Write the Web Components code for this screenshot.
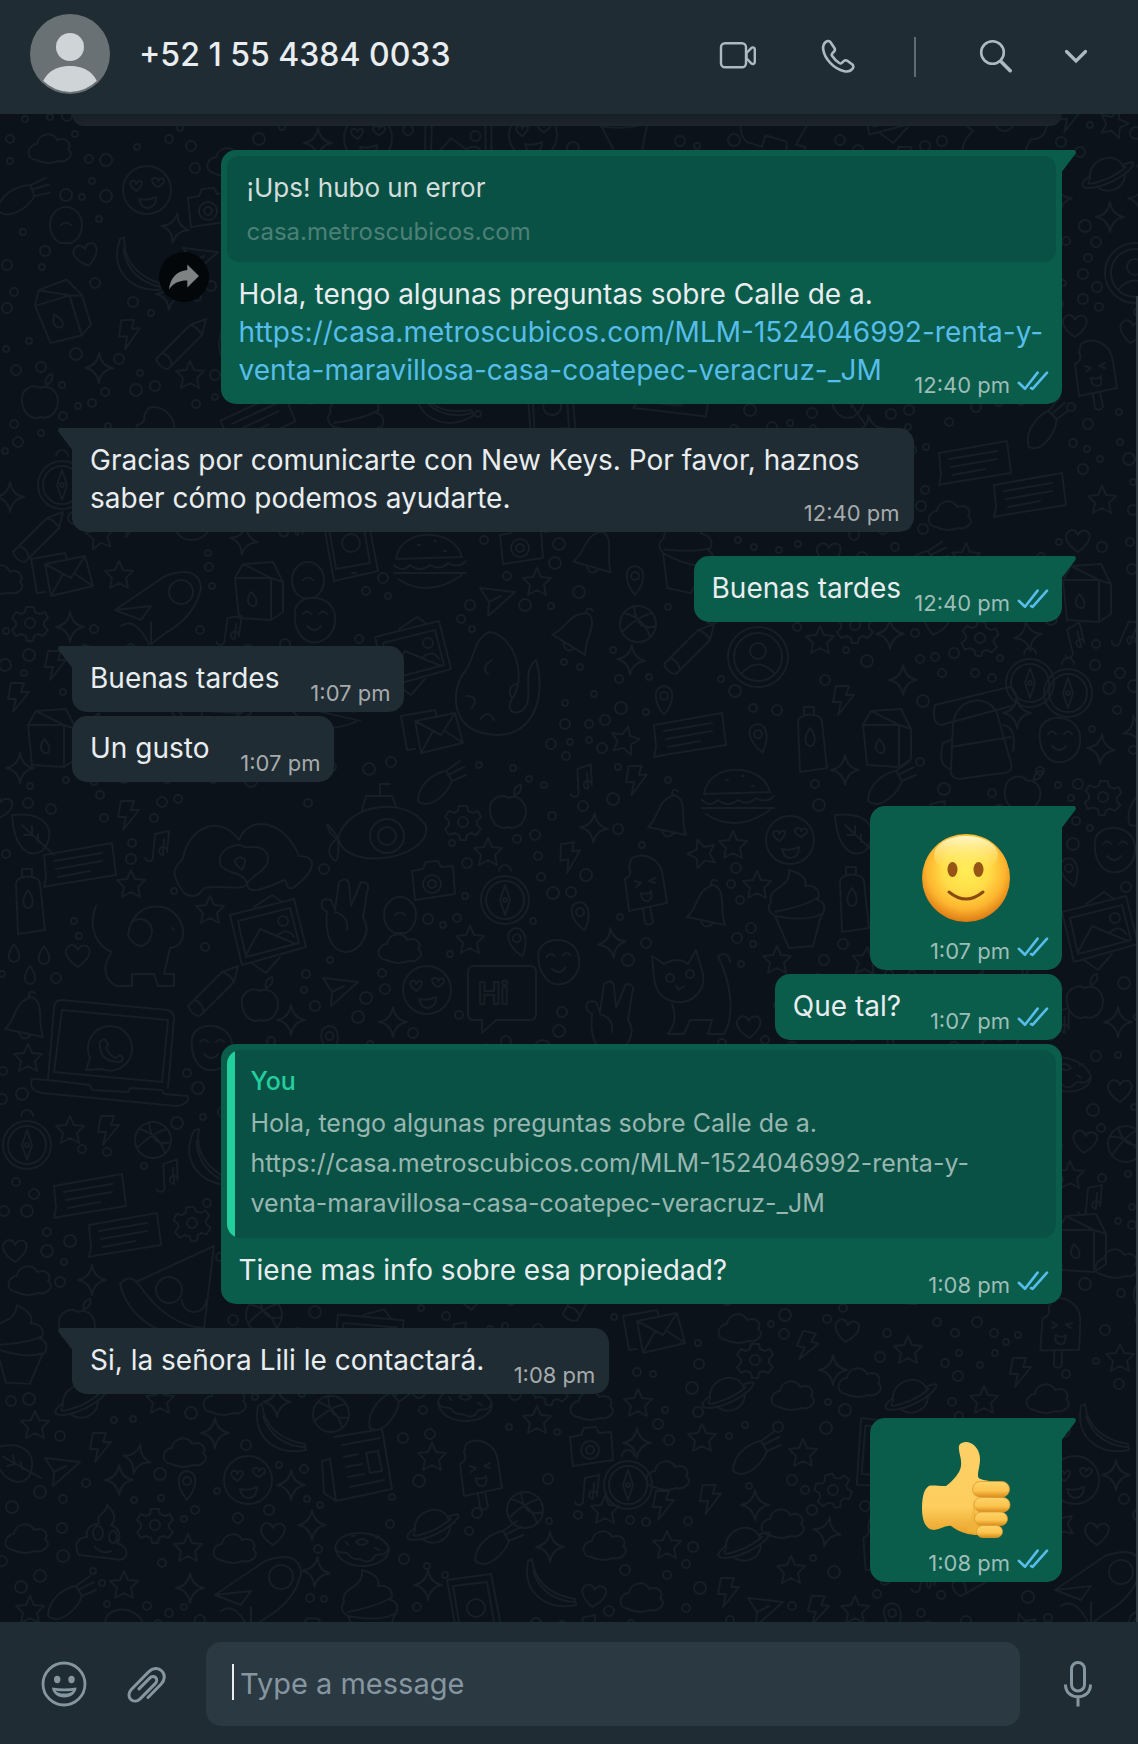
<!DOCTYPE html>
<html lang="es">
<head>
<meta charset="utf-8">
<meta name="viewport" content="width=device-width, initial-scale=1">
<title>Chat</title>
<style>
  html, body { margin: 0; height: 100%; }
  body {
    --panel: #202c33; --canvas: #0b1219; --doodle: #171f26;
    --in: #202c33; --out: #0a5c4b; --card: #0a5145; --text: #e9edef;
    --icon: #aebac1; --muted: #8696a0; --link: #57bdea; --accent: #22cf9d;
    background: var(--canvas); color: var(--text);
    font-family: Inter, "Liberation Sans", sans-serif; font-size: 28px; line-height: 38px;
  }
</style>
</head>
<body>
<chat-app>
  <chat-header slot="header">+52 1 55 4384 0033</chat-header>
  <chat-bubble side="out" tail time="12:40 pm" wide forward>
    <link-card slot="card" site="casa.metroscubicos.com">¡Ups! hubo un error</link-card>
    Hola, tengo algunas preguntas sobre Calle de a.<br><chat-link href="#casa"><span>https://casa.metroscubicos.com/MLM-1524046992-renta-y-</span><span>venta-maravillosa-casa-coatepec-veracruz-_JM</span></chat-link>
  </chat-bubble>
  <chat-bubble side="in" tail time="12:40 pm" wide><span>Gracias por comunicarte con New Keys. Por favor, haznos</span> <span>saber cómo podemos ayudarte.</span></chat-bubble>
  <chat-bubble side="out" tail time="12:40 pm">Buenas tardes</chat-bubble>
  <chat-bubble side="in" tail time="1:07 pm">Buenas tardes</chat-bubble>
  <chat-bubble side="in" time="1:07 pm">Un gusto</chat-bubble>
  <chat-bubble side="out" tail time="1:07 pm" emoji><emoji-smile></emoji-smile></chat-bubble>
  <chat-bubble side="out" time="1:07 pm">Que tal?</chat-bubble>
  <chat-bubble side="out" time="1:08 pm" wide>
    <quote-card slot="card" author="You">Hola, tengo algunas preguntas sobre Calle de a.<br>https://casa.metroscubicos.com/MLM-1524046992-renta-y-venta-maravillosa-casa-coatepec-veracruz-_JM</quote-card>
    Tiene mas info sobre esa propiedad?
  </chat-bubble>
  <chat-bubble side="in" tail time="1:08 pm">Si, la señora Lili le contactará.</chat-bubble>
  <chat-bubble side="out" tail time="1:08 pm" emoji><emoji-thumb></emoji-thumb></chat-bubble>
  <chat-composer slot="footer"></chat-composer>
</chat-app>

<script>
const define = (name, render) => customElements.define(name, class extends HTMLElement {
  connectedCallback() {
    if (this.shadowRoot) return;
    this.attachShadow({ mode: 'open' }).innerHTML = render(this);
  }
});

define('chat-app', () => `
  <style>
    :host { display: flex; flex-direction: column; min-height: 100vh; }
    main { position: relative; flex: 1; overflow: hidden; display: flex; flex-direction: column; }
    .list { position: relative; flex: 1; display: flex; flex-direction: column; padding: 0 76px 40px 72px; }
    .earlier { height: 12px; border-radius: 0 0 15px 15px; background: linear-gradient(#161f25, #1b252b); }
    .thumb { position: absolute; right: 0; top: 182px; bottom: 0; width: 2px; background: #323b41; }
  </style>
  <slot name="header"></slot>
  <main>
    <chat-wallpaper></chat-wallpaper>
    <div class="list"><div class="earlier"></div><slot></slot></div>
    <div class="thumb"></div>
  </main>
  <slot name="footer"></slot>`);

define('chat-header', () => `
  <style>
    :host { display: block; background: var(--panel); }
    header { display: flex; align-items: center; height: 114px; padding: 0 38px 0 30px; box-sizing: border-box; }
    .avatar { width: 80px; height: 80px; margin: 0 29px 6px 0; }
    h1 { flex: 1; margin: 0 0 4px; font-size: 32px; line-height: 40px; font-weight: 500; }
    .group { display: flex; gap: 52px; }
    .group.tight { gap: 32px; }
    .bar { width: 2px; height: 40px; margin: 0 56px 0 52px; background: #5f6b72; }
    button { width: 48px; height: 48px; padding: 0; border: 0; background: none; color: var(--icon); }
    svg { display: block; }
  </style>
  <header>
    <svg class="avatar" viewBox="0 0 80 80"><defs><clipPath id="c"><circle cx="40" cy="40" r="38"/></clipPath></defs>
      <circle cx="40" cy="40" r="40" fill="#6a7175"/>
      <circle cx="40" cy="33" r="14" fill="#cfd4d6"/>
      <path clip-path="url(#c)" d="M10 76C14 58 26 52 40 52s26 6 30 24v4H10z" fill="#cfd4d6"/></svg>
    <h1><slot></slot></h1>
    <div class="group">
      <button aria-label="Video call"><svg viewBox="0 0 48 48" fill="none" stroke="currentColor" stroke-width="2.4" stroke-linejoin="round"><rect x="7" y="10.200" width="25" height="24" rx="4"/><path d="M32.500 20l5-5.200c1.300-.9 3.300-.3 3.300 1.500v12.800c0 1.800-2 2.400-3.300 1.500l-5-5.200z"/></svg></button>
      <button aria-label="Voice call"><svg viewBox="0 0 48 48" fill="none" stroke="currentColor" stroke-width="2.600" stroke-linejoin="round"><path transform="translate(0 -1)" d="M12.200 9.600c1.400-1 3.300-.9 4.300.6l3.900 5.700c.8 1.200.6 2.600-.3 3.600l-1.800 1.900c-.7.8-.7 1.700-.1 2.600 2 3 4.100 5.100 7 7 .9.6 1.900.6 2.600-.1l1.900-1.800c1-.9 2.400-1.100 3.600-.3l4.700 3.400c1.500 1 1.700 3 .7 4.300-1.900 2.600-5.100 3.500-8.500 2.700C19.600 36.700 10.600 26.600 9.200 17.500c-.5-3.300.5-6 3-7.900z"/></svg></button>
    </div>
    <div class="bar"></div>
    <div class="group tight">
      <button aria-label="Search"><svg viewBox="0 0 48 48" fill="none" stroke="currentColor" stroke-linecap="round"><circle cx="20.500" cy="19.500" r="11.300" stroke-width="2.600"/><path d="M29 28.500l9.200 9.200" stroke-width="3.600"/></svg></button>
      <button aria-label="Menu"><svg viewBox="0 0 48 48" fill="none" stroke="currentColor" stroke-width="3.200" stroke-linecap="round"><path d="M14.500 18.500l9.500 9.500 9.500-9.500"/></svg></button>
    </div>
  </header>`);

const ticks = `<svg width="32" height="22" viewBox="0 0 32 22" fill="none" stroke="var(--link)" stroke-width="2.600" stroke-linecap="round" stroke-linejoin="round"><path d="M1.800 12.800l6.200 6L20.600 2.600M14 18l1.600.8L30 2.600"/></svg>`;

define('chat-bubble', el => {
  const out = el.getAttribute('side') === 'out';
  const emoji = el.hasAttribute('emoji');
  return `
  <style>
    :host { display: flex; align-items: center; gap: 12px; margin-top: 4px; justify-content: flex-start; }
    :host([tail]) { margin-top: 24px; }
    :host([side=out]) { justify-content: flex-end; }
    .bubble { position: relative; box-sizing: border-box; border-radius: 15px; background: var(--in); max-width: 85%; }
    :host([wide]) .bubble { width: 85%; }
    :host([side=out]) .bubble { background: var(--out); }
    :host([tail][side=out]) .bubble { border-top-right-radius: 0; }
    :host([tail][side=in]) .bubble { border-top-left-radius: 0; }
    .body { display: flex; flex-direction: column; padding: 13px 18px 15px; }
    .gap { display: inline-block; width: 107px; height: 1px; }
    :host([side=out]) .gap { width: 143px; }
    :host([emoji]) .body { width: 156px; align-items: center; }
    .meta { display: flex; gap: 7px; align-self: flex-end; margin: -19px -4px -11px 0; height: 30px;
      font-size: 22px; line-height: 30px; color: #a6abad; white-space: nowrap; }
    :host([side=out]) .meta { color: #9dbeb7; margin-right: -5px; }
    .tail { position: absolute; top: 0; width: 15px; height: 23px; }
    :host([side=out]) .tail { left: calc(100% - 1px); fill: var(--out); }
    :host([side=in]) .tail { right: calc(100% - 1px); fill: var(--in); transform: scaleX(-1); }
    .fwd { width: 50px; height: 50px; padding: 0; border: 0; border-radius: 50%; background: #040709; }
    .fwd svg { display: block; }
  </style>
  ${el.hasAttribute('forward') ? `<button class="fwd" aria-label="Forward"><svg viewBox="0 0 50 50" fill="#7f8283"><path d="M28.300 12.500L40 24 28.300 35.500v-7C20 28.500 14.500 31 10 37.500 11 27 17 19 28.300 18z"/></svg></button>` : ''}
  <div class="bubble">
    ${el.hasAttribute('tail') ? '<svg class="tail" viewBox="0 0 15 23"><path d="M0 0h13q3 1 1.300 4L0 23z"/></svg>' : ''}
    <slot name="card"></slot>
    <div class="body">
      <div class="text"><slot></slot>${emoji ? '' : '<span class="gap"></span>'}</div>
      <div class="meta"><span>${el.getAttribute('time')}</span>${out ? ticks : ''}</div>
    </div>
  </div>`;
});

define('chat-link', el => `
  <style>:host { display: inline; } a { color: var(--link); text-decoration: none; }</style>
  <a href="${el.getAttribute('href')}"><slot></slot></a>`);

define('link-card', el => `
  <style>
    :host { display: block; padding: 6px 6px 0; }
    .card { padding: 10px 20px 8px; border-radius: 12px; background: var(--card); font-size: 26px; line-height: 44px; color: #d3dedc; }
    .site { font-size: 24px; color: #4c8076; }
  </style>
  <div class="card"><div><slot></slot></div><div class="site">${el.getAttribute('site')}</div></div>`);

define('quote-card', el => `
  <style>
    :host { display: block; padding: 6px 6px 0; }
    .card { display: flex; border-radius: 14px; overflow: hidden; background: var(--card); }
    .bar { flex: none; width: 8px; background: var(--accent); }
    .in { padding: 11px 44px 15px 16px; font-size: 25px; line-height: 40px; color: #98b6b0; }
    b { display: block; margin-bottom: 2px; font-weight: 500; color: var(--accent); }
  </style>
  <div class="card"><div class="bar"></div><div class="in"><b>${el.getAttribute('author')}</b><slot></slot></div></div>`);

define('emoji-smile', () => `
  <style>:host { display: block; padding: 11px 0 29px; } svg { display: block; width: 96px; height: 96px; }</style>
  <svg viewBox="0 0 96 96" role="img" aria-label="Smiling face"><defs>
    <radialGradient id="r" cx="48" cy="40" r="52" gradientUnits="userSpaceOnUse"><stop offset="0" stop-color="#ffee58"/><stop offset=".45" stop-color="#ffdc46"/><stop offset=".75" stop-color="#fdb52f"/><stop offset="1" stop-color="#dd7a14"/></radialGradient>
    <linearGradient id="h" x1="0" y1="0" x2="0" y2="1"><stop offset="0" stop-color="#fffbd2" stop-opacity=".95"/><stop offset="1" stop-color="#ffe94f" stop-opacity="0"/></linearGradient></defs>
    <circle cx="48" cy="48" r="44" fill="url(#r)"/><ellipse cx="48" cy="25" rx="32" ry="19" fill="url(#h)"/>
    <ellipse cx="34.500" cy="39.500" rx="5" ry="7.500" fill="#955516"/><ellipse cx="60.500" cy="39.500" rx="5" ry="7.500" fill="#955516"/>
    <path d="M31 62Q48 76 65 62" fill="none" stroke="#8a4a10" stroke-width="3" stroke-linecap="round"/></svg>`);

define('emoji-thumb', () => `
  <style>:host { display: block; padding: 11px 0 29px; } svg { display: block; width: 96px; height: 96px; }</style>
  <svg viewBox="0 0 96 96" role="img" aria-label="Thumbs up"><defs>
    <linearGradient id="p" x1="0" y1="0" x2="0" y2="1"><stop offset="0" stop-color="#fdd067"/><stop offset=".7" stop-color="#fdcd5d"/><stop offset="1" stop-color="#e9a127"/></linearGradient>
    <linearGradient id="f" x1="0" y1="0" x2="0" y2="1"><stop offset="0" stop-color="#fed369"/><stop offset=".6" stop-color="#fbc44d"/><stop offset="1" stop-color="#da8b1c"/></linearGradient></defs>
    <path d="M13 43.500c5-.5 10 1 15 .5 7-5 14-13 15-20C44 16 40 10 41 4c1-3 4-4 8-4 8 1 13 9 13 17 0 7-2 11-2 17 0 3 5 4 11 5l4 52c-11 3-28 4-42-7-4-1-10 3-17 4-8 0-12-9-12-22 0-13 3-22 9-22.500z" fill="url(#p)"/>
    <path d="M59 38c-5 8-3 17-2 28 1 12 4 21 8 26-5 0-13-1-17-3 8-8 7-38 11-51z" fill="#f0b53b" opacity=".65"/>
    <g fill="url(#f)" stroke="#e09a2c" stroke-width=".8"><rect x="54.500" y="39.500" width="37" height="15.500" rx="7.700"/><rect x="56" y="55.500" width="36" height="14.500" rx="7.200"/><rect x="56.500" y="70" width="33" height="13.500" rx="6.700"/><rect x="58.500" y="83.500" width="26" height="12" rx="6"/></g></svg>`);

define('chat-composer', () => `
  <style>
    :host { display: block; background: var(--panel); }
    footer { display: flex; align-items: center; padding: 20px 36px 18px 40px; }
    .tools { display: flex; gap: 35px; margin-right: 35px; }
    button { width: 48px; height: 48px; padding: 0; border: 0; background: none; color: var(--muted); }
    svg { display: block; }
    .field { flex: 1; display: flex; align-items: center; height: 84px; padding: 0 26px; border-radius: 15px; background: #2b3942; }
    .caret { width: 2px; height: 36px; margin: 0 6px 4px 0; background: #e9edef; }
    input { flex: 1; min-width: 0; padding: 0; border: 0; outline: 0; background: none; color: var(--text); font: inherit; font-size: 29px; line-height: 40px; }
    input::placeholder { color: var(--muted); opacity: 1; }
    .mic { margin-left: 34px; }
  </style>
  <footer>
    <div class="tools">
      <button aria-label="Emoji"><svg viewBox="0 0 48 48"><circle cx="24" cy="24" r="21" fill="none" stroke="currentColor" stroke-width="2.800"/><ellipse cx="17.200" cy="19.500" rx="3.200" ry="3.700" fill="currentColor"/><ellipse cx="31.500" cy="19.500" rx="3.200" ry="3.700" fill="currentColor"/><path d="M12 27.500q12.300 2.200 24.600 0c-.6 6-5.600 10-12.300 10S12.600 33.500 12 27.500z" fill="currentColor"/><path d="M15.600 30.700q8.700 1.300 17.400 0-2 2.800-8.700 2.800t-8.700-2.800z" fill="#202c33"/></svg></button>
      <button aria-label="Attach"><svg viewBox="0 0 48 48" fill="none" stroke="currentColor" stroke-width="3" stroke-linecap="round"><path d="M25 37.500l13-13.200c4-4.200 4.500-9.700.8-13.300-3.600-3.600-9-3.300-13.200.9L8.300 29.500c-2.900 3-3.100 7.200-.6 9.800 2.600 2.500 6.700 2.300 9.700-.7l14.800-15c1.800-1.900 2-4.500.5-6-1.600-1.500-4.200-1.300-6 .5L16 28.900"/></svg></button>
    </div>
    <div class="field"><span class="caret"></span><input type="text" aria-label="Type a message" placeholder="Type a message"></div>
    <button class="mic" aria-label="Record voice message"><svg viewBox="0 0 48 48" fill="none" stroke="currentColor" stroke-width="3"><rect x="17.500" y="2.500" width="13" height="28.500" rx="6.500"/><path d="M11.500 24.500c0 8 5.500 12.200 12.500 12.200s12.500-4.200 12.500-12.200M24 37v9.500"/></svg></button>
  </footer>`);

/* Line drawings for the wallpaper, each centred on the origin. */
const art = {
  star: [15, 'M0-14L4-5 14-4 7 3 9 13 0 8-9 13-7 3-14-4-4-5z'],
  spark: [13, 'M0-15Q2-2 14 0 2 2 0 15-2 2-14 0-2-2 0-15z'],
  cloud: [22, 'M-14 12C-26 10-22-4-13-4-12-15 4-17 7-8 18-12 22-2 18 1 26 7 16 15 8 13 0 16-8 15-14 12z'],
  heart: [13, 'M0 12C-8 7-16-2-10-8-6-12-1-9 0-5 2-10 8-11 11-7 14 0 6 8 0 12z'],
  bolt: [15, 'M-7-14H6L3-5h8L-5 15-2 2h-8z'],
  plane: [18, 'M-17-12L18-8-9 16-8 2zM-8 2L4-4'],
  drop: [9, 'M0-9C8 2 6 8 0 9-6 8-8 2 0-9z'],
  pin: [15, 'M0 15C-12 0-10-13 0-14 10-13 12 0 0 15zM-4-4a4 4 0 108 0 4 4 0 10-8 0'],
  gear: [17, 'M-4-16h8l1 5 5 2 5-2 3 6-4 4v4l4 4-5 6-5-2-4 2-1 5h-6l-1-5-5-2-5 2-4-6 4-4v-4l-4-4 4-6 5 2 4-2zM-5 0a5 5 0 1010 0 5 5 0 10-10 0'],
  planet: [26, 'M-17 6C-20-14 10-24 17-5M-10 14C2 22 16 16 18 3M-17 3C-36 17-16 18 4 9 25-1 36-17 16-8M-18 8C-22 14-8 9 2 5 12 0 22-8 18-6'],
  face: [26, 'M-24 0a24 24 0 1048 0 24 24 0 10-48 0M-10 1c-8-4-8-9-5-10s4 1 4 3c2-4 6-4 6-1s-3 5-5 8zM11-3c-7-3-7-8-4-9s4 1 4 3c2-4 6-3 6 0s-3 4-6 6zM-8 9q9 2 17-2 0 10-8 11-7 0-9-9z'],
  cam: [24, 'M-20-10l11-2 3-7 12-1 3 6 12-1 2 28-40 6zM-9 3a9 9 0 1018 0 9 9 0 10-18 0M-4 3a4 4 0 108 0 4 4 0 10-8 0'],
  donut: [28, 'M-27-2C-24-22 18-22 27-2 28 20-22 24-27-2zM-27-3c4 10 10 2 14 8s10 3 13 5 9 3 12-3 10 2 14-8M-6-8q6-6 12 0-6 6-12 0M-16-8l2 3M14-12l3-2M-10-14h3M13-2l4 2'],
  banana: [28, 'M-22-24l4-2C-16-4 0 10 25 14l1 6C-4 26-28 8-22-24zM-17-14C-10 8 8 16 24 17'],
  env: [32, 'M-20-14L20-22 28 8-14 18zM-20-14L6 0 20-22M-14 18L-2-4M28 8L10-4M-20 14l-8 1-6-34 34-6 2 7'],
  msg: [40, 'M-36-10L32-22 36 10-26 20-36 22-34 12zM-26-4L22-12M-24 4L22-4M-22 12L10 6'],
  comp: [28, 'M-24 3a24 24 0 1048 0 24 24 0 10-48 0M-19 3a19 19 0 1038 0 19 19 0 10-38 0M-6-26a6 6 0 1112 0M0-12L5 3 0 18-5 3zM-2 3a2 2 0 104 0 2 2 0 10-4 0'],
  photo: [42, 'M-38-18L26-34 38 14-26 32zM-30-12L22-25 31 10-22 24zM-22 22L-8-4 28 11M10 2Q20-6 26 4M10-12a5 5 0 1010 0 5 5 0 10-10 0M-14-26L4-38 14-31M-16 30L-2 40 12 24'],
  apple: [20, 'M0-12C-8-17-20-10-18 2-16 16-6 20 0 17 8 20 17 14 18 2 18-10 8-16 0-12zM6-15Q4-24 12-26 14-18 6-15z'],
  pencil: [30, 'M-24 14L10-20 26-26 22-10-12 24Q-20 24-24 14zM-18 8q8 2 10 12M10-20q8 2 12 10'],
  bell: [24, 'M-20 12C-8 2-12-14 6-20 20-16 12 4 18 20zM-6 16q4 10 12 2M4-20q0-8 6-4'],
  bottle: [34, 'M-12-18C-12-28 12-28 12-18L17 28-10 32zM-6-26v-7h10v6M0-12C8-2 4 6 0 6-6 5-6-4 0-12z'],
  leaf: [24, 'M-20-20C16-24 26-2 10 16-4 24-18 12-20-20zM-10-10L22 20M0 0v-9M0 0h-8M6 7v-8'],
  note: [16, 'M-10 12a4 4 0 108-2L0-12 14-15 12 6a4 4 0 10-4 3L9-7'],
  pop: [34, 'M-14-26C-4-34 16-28 18-8L22 18-16 26-20-6q8-4 4-12zM-2 24l2 14q4 4 8-1L5 22M-10-4l6 2-5 4M10-7l-6 3 6 2M-4 8q8 2 10-2 2 10-4 10-6 0-6-8'],
  milk: [34, 'M-22-10L-14-24 16-26 26-6 26 24 14 32-18 30zM-22-10H14L26-6M14-10V30M-14-24L14-10M-6 4C2 12 0 18-4 18s-8-6-2-14z'],
  hand: [38, 'M-18-6C-26-10-26-22-14-18L-10-8-6-36Q2-42 4-34L6-12 16-36Q26-36 22-26L18 0C28 14 14 34 2 34-16 34-20 12-18-6zM-10-6Q4-2 2 12'],
  dog: [50, 'M-44-34C-54-10-40 8-28 12-40 28-34 40-24 46H-8V34H14L18 46H34V34H24L30 8C50 6 46-24 26-32 4-38-10-24-12-4 0 14 10 4 12-8 12-20 0-24-8-18M32-12l2 2'],
  cat: [50, 'M-36-12L-38-34-26-26Q-12-34-2-26L6-40 12-20C18 0 2 14-14 12-26 10-34 4-36-12zM-18 14C-12 30-18 38-22 44H-6L0 30H22L18 44H34C46 24 40-10 28-34q10-6 12 6M-24-12a4 4 0 108 0 4 4 0 10-8 0M-4-16a4 4 0 108 0 4 4 0 10-8 0M-14-4l3 4 5-4'],
  sub: [52, 'M-44 0C-34-36 26-42 44-12 50 20-36 36-44 0zM-12-2a17 17 0 1034 0 17 17 0 10-34 0M-4-2a9 9 0 1018 0 9 9 0 10-18 0M-20-28l4-14h26l4 10M-2-42v-12h10M-44 0q-14-20-10-10t10 10q-14 10-6 20t6-20'],
  burger: [40, 'M-34-6C-30-38 24-38 32-8zM-36 0Q-28 8-20 0-10 8 0 0 10 6 18-2q10 6 18-2M-36 8H36M-32 14q30 20 64-4M-12-20h2M4-24h2M14-14h2'],
  cup: [40, 'M-26-8C-30-24-6-20-8-40 8-36 10-28 8-24 22-26 24-14 20-10 30-8 28 2 24 6L16 36-8 38-22 6q-10-6-4-14zM-22 2Q8-4 20-12M-22 6Q10 12 24 4'],
  phone: [38, 'M-28-30L16-36 28 26-16 36zM-22-24L12-28 20 18-14 24zM-8-2a9 9 0 1118 0 9 9 0 11-18 0M2 28h4'],
  news: [38, 'M-24-30L24-38 34 22-22 34-34 26-36-6-28-8-22 34M-16-22L22-29M-14-10L0-13M-12 0L4-3M-10 10L6 7M-8 20L26 13M8-14L20-16 24 4 12 6z'],
  lap: [74, 'M-54-42Q-54-50-46-50L60-40Q66-38 66-32L60 38M-54-42L-60 30M-46-40L60-30 54 32-54 22zM-60 30L-76 29Q-80 40-66 43L68 56Q82 54 80 46L56 44 54 40 22 38 20 42-16 40-18 35zM-20-2a22 22 0 1144 0 22 22 0 01-30 21L-22 20-18 8A22 22 0 01-20-2M-8-8Q-4-14 0-6L-2-2Q2 6 8 8l4-3Q18 8 12 12-10 12-8-8'],
  bag: [46, 'M-22-10C-20-40 20-44 24-14L36 28Q38 38 28 38L-16 44Q-26 42-24 34zM-24 34Q-38 32-32 8L-22 4M28-10Q42-8 38 16M-24 12L36 2M-40-30L34-48Q44-44 40-30L-34-10Q-44-12-40-30z'],
  prof: [32, 'M-30 0a30 30 0 1060 0 30 30 0 10-60 0M-24 0a24 24 0 1048 0 24 24 0 10-48 0M-8-6a8 8 0 1016 0 8 8 0 10-16 0M-17 17Q0-2 17 17'],
  mask: [26, 'M-20-10C-16-28 18-26 20-4 22 14 8 24-4 22-14 20-22 8-20-10zM-12-6q4-5 8 0M4-6q4-5 8 0M-8 6q8 8 14 0'],
  poop: [30, 'M-24 20C-32 6-20 2-16 2-18-10-8-10-4-12-8-22 4-20 4-30 14-20 12-14 8-10 18-6 18 4 14 8 28 12 26 28 12 24zM-10-2a5 7 0 1010 0 5 7 0 10-10 0M6 2a4 6 0 108 0 4 6 0 10-8 0M-8 12q8 8 16 4'],
  rocket: [46, 'M-40 10L10-24Q44-36 46-12 40 16 12 32L-4 44V22M-40 10L-14 20-4 6zM14-8a12 12 0 1024 0 12 12 0 10-24 0M-34 26Q-20 16-6 44'],
  carrot: [24, 'M-22 16C-22-4 0-14 6-14L12-4C8 8-10 26-22 16zM6-14L20-24M8-10L24-18M12-4L26-10'],
  hands: [70, 'M-60 34C-80 8-66 6-62-2-56-34-24-46-6-20 4-46 40-40 54-4 74-4 70 12 48 28 40 30 42 20 40 20 28 24 4 38 2 24 6 14 28 10 22-6 16-18-2-10-2-14-12-18-30-8-24 6-18 14 0 12 2 24-4 32-26 24-40 28-46 30-44 40-60 34zM-3-2q6 0 0 12-10-8-6-11t6-1'],
  pizza: [52, 'M-50-6Q-40-18-30-4-2 36 34 38L30 50C-20 46-44 20-50-6zM-34-8L44-44 34 38M-14 0a13 13 0 1026 0 13 13 0 10-26 0M12 10a12 12 0 1024 0'],
  ball: [20, 'M-18 0a18 18 0 1036 0 18 18 0 10-36 0M-14-11Q6-6 12 13M-16 8Q0-8 14-11M-4-18Q-2 8 18 2'],
  bulb: [20, 'M-16 0a16 18 0 1132 0q0 12-10 18H-6Q-16 12-16 0zM-5 0q5-5 10 0'],
  octo: [60, 'M-10-58C14-54 26-16 14 6 0 24 24 30 28 10 30-6 24-20 36-30 48 10 30 52-12 44-50 40-50-2-34-20-24-36-26-52-10-58zM-20 30q8-12 14 0M-34 6q14 0 6 12M16-6q-10 4-4 14M-8-30q-12 8-4 14']
};
const placed = `leaf 32 835,msg 80 865,bottle 28 902,star 131 884,dog 140 940,hands 245 860,sub 382 838,gear 463 822,star 488 852,photo 268 933,hand 345 918,bulb 400 915,cloud 400 948,comp 505 897,cam 432 881,star 470 940,bolt 128 815,note 155 846,star 210 910,heart 78 955,drop 14 953,drop 44 955,drop 30 975,pencil 212 992,apple 260 1003,plane 340 990,face 427 990,bell 25 1017,lap 108 1050,star 28 1058,mask 212 1048,spark 291 1020,spark 393 1022,comp 27 1142,star 70 1130,ball 153 1140,bolt 108 1130,msg 90 1196,msg 125 1235,heart 15 1250,cloud 30 1280,pizza 170 1290,spark 92 1280,comp 62 482,spark 10 497,pencil 37 538,env 65 578,star 119 575,gear 30 623,spark 70 627,rocket 155 600,milk 257 588,bulb 308 580,mask 315 620,phone 350 545,burger 430 565,cam 520 545,star 537 582,plane 497 600,photo 413 655,octo 500 690,bolt 18 697,bolt 55 665,milk 50 735,spark 20 768,carrot 440 785,env 435 735,pin 635 580,ball 638 624,pencil 688 650,prof 758 657,star 820 640,gear 855 625,spark 890 634,bolt 843 700,pin 664 700,spark 903 680,comp 1030 680,comp 1068 690,msg 690 735,bottle 810 740,milk 885 735,bag 975 735,spark 1017 713,mask 1060 740,burger 738 800,carrot 890 785,msg 975 463,msg 1030 495,cloud 950 515,star 1102 500,heart 1078 540,milk 1085 590,spark 845 770,bell 668 815,face 790 840,star 733 845,leaf 855 835,pop 645 885,bell 707 905,star 757 885,cup 797 910,bottle 852 900,photo 1100 930,mask 1115 850,cat 690 990,hand 610 1020,star 777 960,apple 1085 1000,spark 1118 1022,heart 1120 1090,star 1070 1175,milk 1080 1240,cloud 1117 1263,note 1088 1200,planet 80 1400,star 35 1425,star 160 1400,cloud 225 1400,spark 277 1402,banana 280 1430,donut 465 1405,star 537 1420,cloud 592 1405,bolt 100 1447,plane 62 1470,cloud 185 1452,spark 215 1433,pin 187 1485,face 248 1480,news 358 1467,spark 291 1485,star 432 1457,pop 480 1470,cam 590 1447,note 585 1490,poop 103 1535,gear 155 1525,cloud 27 1538,spark 312 1525,heart 273 1533,cloud 235 1548,donut 362 1550,planet 432 1525,ball 525 1510,carrot 497 1545,spark 550 1547,star 605 1510,cloud 605 1545,star 188 1548,rocket 255 1585,spark 119 1480,star 124 1585,star 30 1610,carrot 70 1600,spark 190 1588,cup 370 1610,spark 428 1585,phone 475 1610,banana 550 1585,env 657 1335,cloud 740 1328,gear 755 1360,planet 727 1393,cloud 793 1395,spark 833 1370,star 908 1350,cloud 860 1382,planet 910 1395,bolt 1020 1372,star 984 1400,cloud 1048 1398,star 1120 1358,star 638 1403,spark 637 1443,star 702 1438,carrot 755 1455,star 803 1453,comp 628 1482,cloud 668 1475,bolt 663 1505,spark 755 1505,cloud 783 1523,planet 743 1543,star 667 1545,star 791 1570,cloud 642 1597,bolt 728 1592,star 855 1610,plane 765 1610,banana 1103 1430,face 1075 1480,heart 1097 1533,rocket 1095 1580,spark 1116 1475,planet 1107 173,spark 1110 217,prof 1135 273,heart 1075 325,pop 1095 370,face 147 190,cam 208 208,star 190 375,pencil 180 345,plane 200 260,face 368 138,spark 318 143,cloud 50 148,face 533 135,bulb 66 225,apple 40 400`
  .split(',').map(s => { const [n, x, y] = s.split(' '); return [n, +x, +y]; });

define('chat-wallpaper', () => {
  let seed = 7;
  const rnd = () => (seed = (seed * 16807) % 2147483647) / 2147483647;
  const spots = placed.map(([n, x, y]) => [x, y, art[n][0]]);
  spots.push([502, 994, 36]);
  const draw = (n, x, y, a = 0) => `<path transform="translate(${x} ${y}) rotate(${a})" d="${art[n][1]}"/>`;
  let out = placed.map(p => draw(...p)).join('');
  const free = (x, y, r) => spots.every(([a, b, q]) => Math.hypot(a - x, b - y) > q + r + 1);
  const scatter = (names, tries) => {
    for (let i = 0; i < tries; i++) {
      const n = names[Math.floor(rnd() * names.length)], x = Math.round(rnd() * 1600), y = Math.round(100 + rnd() * 1540);
      if (free(x, y, art[n][0])) { spots.push([x, y, art[n][0]]); out += draw(n, x, y, Math.round(rnd() * 40 - 20)); }
    }
  };
  scatter(['photo', 'dog', 'burger', 'cup', 'phone', 'env', 'msg', 'pop', 'donut', 'bag', 'milk', 'banana'], 500);
  scatter(['pencil', 'bell', 'apple', 'cam', 'leaf', 'cloud', 'gear', 'mask', 'carrot', 'ball'], 700);
  scatter(['star', 'spark', 'heart', 'bolt', 'note', 'pin'], 1200);
  for (let i = 0; i < 9000; i++) {
    const x = Math.round(rnd() * 1600), y = Math.round(100 + rnd() * 1540), r = 3 + Math.floor(rnd() * 4);
    if (free(x, y, r + 2)) { spots.push([x, y, r + 4]); out += `<circle cx="${x}" cy="${y}" r="${r}"/>`; }
  }
  return `
  <style>
    :host { position: absolute; inset: 0; overflow: hidden; }
    svg { display: block; width: 100%; height: 100%; overflow: visible; }
  </style>
  <svg aria-hidden="true" fill="none" stroke="var(--doodle)" stroke-width="2" stroke-linejoin="round" stroke-linecap="round">
    <g transform="translate(0 -114)">${out}
      <path d="M474 966h56q6 0 6 6v42q0 6-6 6h-34l-14 13v-13h-8q-6 0-6-6v-42q0-6 6-6z"/>
      <text x="478" y="1004" font-size="30" font-weight="700">Hi</text>
    </g>
  </svg>`;
});
</script>
</body>
</html>
